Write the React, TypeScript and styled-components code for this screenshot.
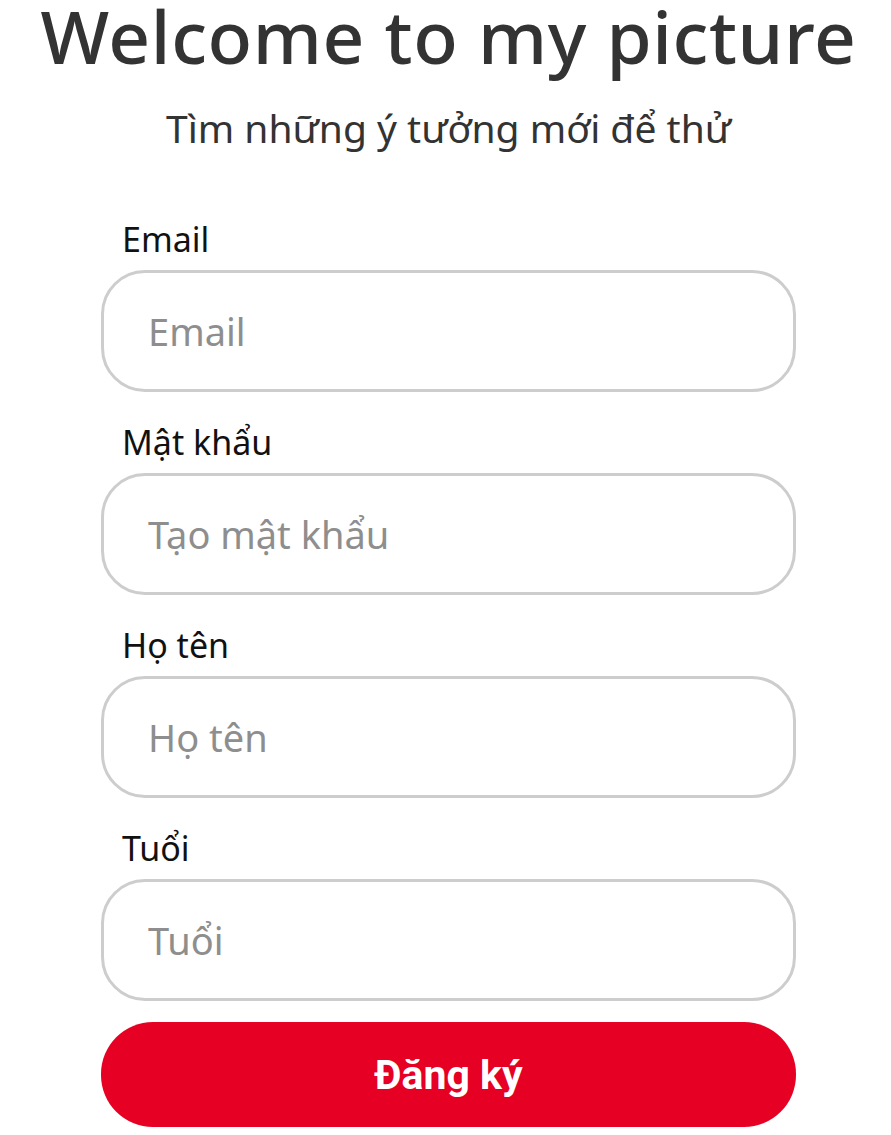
import styled, { createGlobalStyle } from "styled-components";

const GlobalStyle = createGlobalStyle`
    html, body {
        margin: 0;
        padding: 0;
        background: #ffffff;
    }
    body {
        font-family: "Noto Sans", "Open Sans", sans-serif;
        color: #333333;
    }
`;

const Page = styled.main`
    width: 891px;
    display: flex;
    flex-direction: column;
    align-items: center;
    padding-left: 6px;
    box-sizing: border-box;
`;

const Title = styled.h1`
    margin: 0;
    font-size: 73px;
    line-height: 72px;
    font-weight: 500;
    letter-spacing: 0.6px;
    color: #333333;
`;

const Subtitle = styled.p`
    margin: 30px 0 0;
    font-size: 39px;
    line-height: 52px;
    font-weight: 400;
    color: #333333;
`;

const Form = styled.form`
    width: 695px;
    margin-top: 60px;
    display: flex;
    flex-direction: column;
`;

const Field = styled.div`
    display: flex;
    flex-direction: column;
    margin-bottom: 25px;

    &:last-of-type {
        margin-bottom: 21px;
    }
`;

const Label = styled.label`
    padding-left: 21px;
    font-size: 34px;
    line-height: 50px;
    color: #111111;
    margin-bottom: 6px;
`;

const Input = styled.input`
    height: 122px;
    box-sizing: border-box;
    border: 3px solid #cdcdcd;
    border-radius: 44px;
    padding: 0 44px;
    font-family: "Noto Sans", "Open Sans", sans-serif;
    font-size: 38px;
    color: #111111;
    outline: none;
    background: #ffffff;

    &::placeholder {
        color: #8e8e8e;
    }
`;

const SubmitButton = styled.button`
    height: 105px;
    border: none;
    border-radius: 52px;
    background: #e60023;
    color: #ffffff;
    font-family: "Roboto", "Noto Sans", sans-serif;
    font-size: 41px;
    font-weight: 700;
    cursor: pointer;
`;

const fields = [
    { label: "Email", placeholder: "Email" },
    { label: "Mật khẩu", placeholder: "Tạo mật khẩu" },
    { label: "Họ tên", placeholder: "Họ tên" },
    { label: "Tuổi", placeholder: "Tuổi" }
];

export default function App() {
    return (
        <>
            <GlobalStyle />
            <Page>
                <Title>Welcome to my picture</Title>
                <Subtitle>Tìm những ý tưởng mới để thử</Subtitle>
                <Form onSubmit={(e) => e.preventDefault()}>
                    {fields.map((f) => (
                        <Field key={f.label}>
                            <Label>{f.label}</Label>
                            <Input type="text" placeholder={f.placeholder} />
                        </Field>
                    ))}
                    <SubmitButton type="submit">Đăng ký</SubmitButton>
                </Form>
            </Page>
        </>
    );
}
